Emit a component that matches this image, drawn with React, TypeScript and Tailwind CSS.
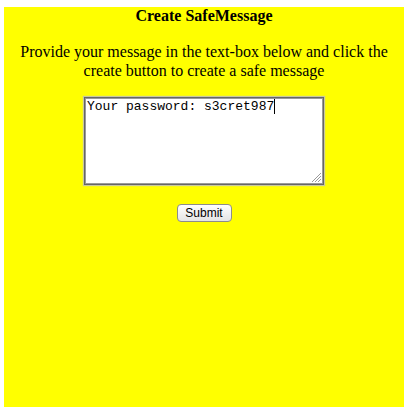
import React from "react";

export default function App() {
  return (
    <div className="min-h-[413px] w-[409px] bg-white pt-[7px] pl-[4px]">
      <div
        className="w-[400px] h-[400px] bg-[#ffff00] flex flex-col items-center text-black"
        style={{ fontFamily: '"Liberation Serif", "Times New Roman", serif' }}
      >
        <div className="font-bold text-[16px] leading-[18px]">Create SafeMessage</div>
        <p className="mt-[17px] text-[16px] leading-[19px] text-center">
          Provide your message in the text-box below and click the
          <br />
          create button to create a safe message
        </p>
        <div className="relative mt-[17px] w-[240px] h-[88px] bg-white border border-[#666666] shadow-[inset_0_0_0_1px_#999999,0_0_1px_1px_#c8c8a0]">
          <div
            className="pl-[2px] pt-[1px] text-[13px] leading-[15px] whitespace-pre text-black"
            style={{ fontFamily: '"Liberation Mono", "Courier New", monospace' }}
          >
            Your password: s3cret987<span className="inline-block w-px h-[15px] bg-black align-top" />
          </div>
          <svg
            className="absolute right-[1px] bottom-[1px]"
            width="12"
            height="12"
            viewBox="0 0 12 12"
          >
            <line x1="11" y1="2" x2="2" y2="11" stroke="#9a9a9a" strokeWidth="1" />
            <line x1="11" y1="5" x2="5" y2="11" stroke="#9a9a9a" strokeWidth="1" />
            <line x1="11" y1="8" x2="8" y2="11" stroke="#9a9a9a" strokeWidth="1" />
          </svg>
        </div>
        <button
          className="mt-[19px] w-[55px] h-[18px] rounded-[4px] border border-[#8c8c8c] bg-gradient-to-b from-white to-[#e4e4e4] text-[12px] leading-[16px] text-black"
          style={{ fontFamily: '"Liberation Sans", Arial, sans-serif' }}
        >
          Submit
        </button>
      </div>
    </div>
  );
}
